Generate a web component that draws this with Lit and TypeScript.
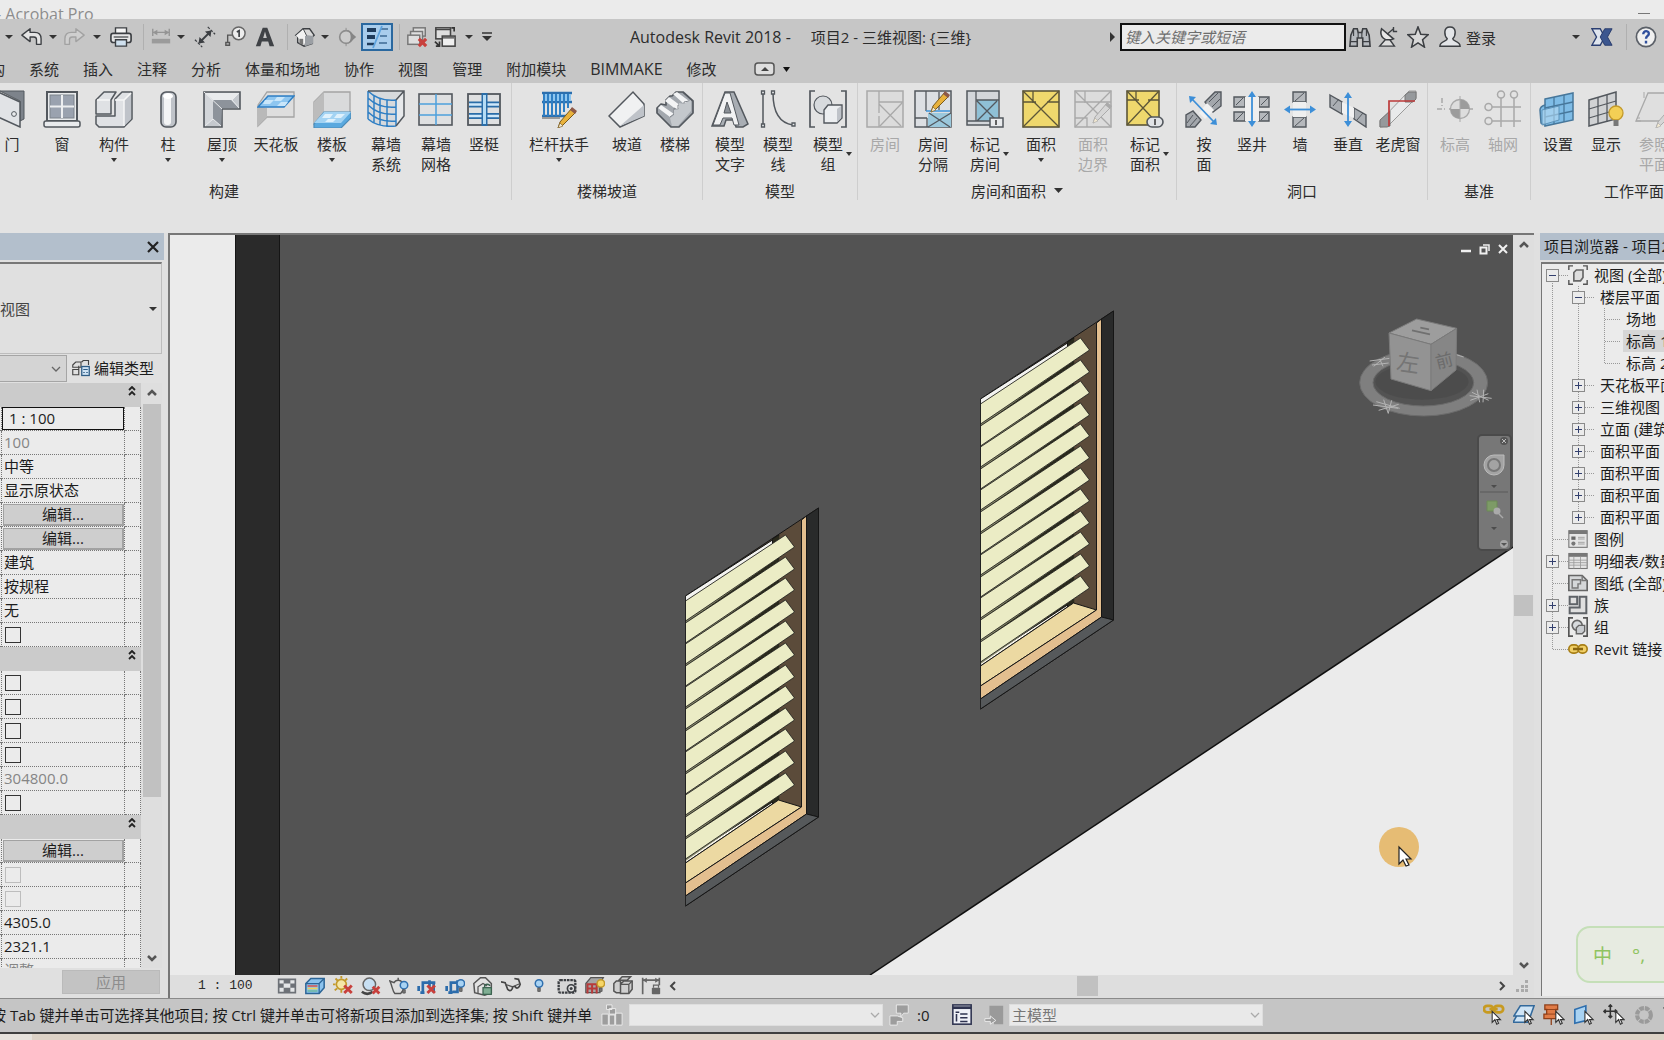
import { LitElement, html, svg, css, nothing } from "lit";
import { customElement, property } from "lit/decorators.js";
import { classMap } from "lit/directives/class-map.js";

const G = "#53585e";
const L = "#e9ebed";
const M = "#bfc3c9";
const B = "#2f7fc4";
const X = "#a9a9a9";

const pencil = (c1 = "#e9b23c", c2 = "#7a5a1c", dx = 0, dy = 0) => svg`
  <g transform="translate(${dx} ${dy})">
    <path d="M16 37l2-6L30 17l4 4-13 13z" fill=${c1} stroke=${c2} stroke-width="1"/>
    <path d="M28 19l2-3 5 4-2 3z" fill=${c1 === "#e9b23c" ? "#8d5a4a" : c2}/><path d="M16 37l2-5 3 3z" fill="#f4ead2" stroke=${c2} stroke-width=".6"/>
  </g>`;

const bulb = (x: number, y: number, r: number, c = "#a9d3f3", s = "#2f6fae") => svg`
  <circle cx=${x} cy=${y} r=${r} fill=${c} stroke=${s} stroke-width="1.8"/>
  <path d="M${x - 1.5} ${y + r + 1}v4h3v-4z" fill="#777" stroke="#555"/>`;

const redX = (x: number, y: number, s = 3) => svg`
  <path d="M${x - s} ${y - s}l${2 * s} ${2 * s}M${x + s} ${y - s}l${-2 * s} ${2 * s}" stroke="#c8403c" stroke-width="3.400" fill="none"/>`;

const pointer = (x: number, y: number) => svg`
  <path transform="translate(${x} ${y})" d="M0 0v12l3-3 2 5 2-1-2-4h4z" fill="#fff" stroke="#333" stroke-width="1.200"/>`;

const RIBBON: Record<string, unknown> = {
  door: svg`<path d="M5 1h26v28l-4 2V11L7 1z" fill="#7d838b" stroke=${G}/><path d="M5 2l22 10v25L5 27z" fill="#e1e3e6" stroke=${G} stroke-width="1.5"/><circle cx="21" cy="24" r="2.4" fill=${L} stroke=${G}/>`,
  window: svg`<rect x="4" y="2" width="30" height="29" fill=${L} stroke=${G} stroke-width="2"/><rect x="7" y="5" width="24" height="23" fill="#9aa2af" stroke="#7d838b"/><path d="M19 5v23M7 16.500h24" stroke="#eceef0" stroke-width="2"/><rect x="1" y="31" width="36" height="6" rx="2" fill=${L} stroke=${G} stroke-width="1.5"/>`,
  component: svg`<path d="M1 10l8-8h12l-5 8v14H1zM1 26h19V9l7-7h10v27l-8 8H4l-3-3z" fill="#dfe1e4" stroke=${G} stroke-width="1.500" stroke-linejoin="round"/><path d="M29 11l7-7v25l-7 7z" fill=${M}/><path d="M2 10h13M20 10h9M29 10l7-7M29 10v26" fill="none" stroke="#f6f6f6" stroke-width="1.500"/>`,
  column: svg`<rect x="12" y="2" width="15" height="35" rx="5" fill=${M} stroke=${G} stroke-width="1.6"/><rect x="15" y="4" width="7" height="31" rx="3" fill="#f3f4f5"/><ellipse cx="19" cy="6" rx="5" ry="3" fill="#fff"/>`,
  roof: svg`<path d="M1 2h36v17H19v18H1z" fill="#c5c9ce" stroke=${G} stroke-width="1.6"/><path d="M2 3h34l-7 7H10z" fill="#e9ebed"/><path d="M2 3l8 7v19l-8 7z" fill="#d3d6da"/><path d="M10 10h18l8 8H19l-1 18-8-7z" fill="#8d939b"/><path d="M1 2l18 17M10 29l-8 7M10 29l8 7M29 10l7-7M29 10l7 8" stroke=${L} fill="none"/>`,
  ceiling: svg`<path d="M1 15l9-13h27v25H10L1 36z" fill="#dedede" stroke="#a4a4a4" stroke-width="1.3"/><path d="M10 27V18M1 36V16l9 2v9z" fill="#b9b9b9"/><path d="M1 17l10-11h26L27 17z" fill="#8ec6f0" stroke="#2f7fc4" stroke-width="1.500"/><path d="M8 10h9l-4 4H6zM20 7h8l-4 4h-7zM24 12h7l-3 4h-8z" fill="#c9e6fa"/>`,
  floor: svg`<path d="M1 12L11 2h26v22H11L1 34z" fill="#d9dadb" stroke="#a4a4a4" stroke-width="1.3"/><path d="M1 12l10-10v22L1 34z" fill="#bcbcbc"/><path d="M1 34l10-12h27v6l-10 10H1z" fill="#5aa9df" stroke="#4d8cb8" stroke-width="1.200"/><path d="M1 33l10-11h27L28 33z" fill="#a3d3f3"/><path d="M12 24h8l-3 4H9zM24 24h8l-4 4h-7zM15 29h8l-3 3h-8z" fill="#dff1fc"/>`,
  curtain: svg`<path d="M1 1h36l-8 10v24C15 37 7 33 1 29z" fill="#d7dadd"/><path d="M37 1v25l-8 10V11z" fill="#e7e9eb"/><path d="M1 1c8 8 17 10 28 9M1 8c8 8 17 10 28 9M1 15c8 8 17 10 28 9M1 22c8 8 17 10 28 9M1 29c8 7 17 8 28 7M1 1v28M7 5v28M13 8v27M20 10v27M29 10v26" fill="none" stroke=${B} stroke-width="1.500"/><path d="M1 1h36v25l-8 10M37 1l-8 9" fill="none" stroke=${G} stroke-width="1.500"/>`,
  grid: svg`<rect x="2" y="4" width="33" height="31" fill="#dfe0e1" stroke=${G} stroke-width="1.600"/><path d="M19 4v31M2 14h33M2 25h33" stroke="#4ea0dc" stroke-width="1.500"/>`,
  mullion: svg`<rect x="3" y="4" width="32" height="31" fill="#dfe0e1" stroke=${G} stroke-width="1.800"/><path d="M4 14.500h30M4 26h30" stroke="#2a6da8" stroke-width="6"/><path d="M4 14.500h30M4 26h30" stroke="#cfe8fa" stroke-width="2.500"/><path d="M19.500 3v33" stroke="#2a6da8" stroke-width="6"/><path d="M19.500 5v29" stroke="#b5dcf5" stroke-width="3"/>`,
  railing: svg`<path d="M2 3h30M2 12h30M2 26h24" stroke="#2c6fae" stroke-width="2.500"/><path d="M3 4h28v7H3z" fill="#8ec6f0"/><path d="M4 4v22M8 4v22M12 4v22M16 4v22M20 4v22M24 4v18M28 4v14" stroke=${B} stroke-width="2"/><path d="M2 28h18" stroke="#9a9a9a" stroke-width="2"/>${pencil(undefined, undefined, 2, 1)}`,
  ramp: svg`<path d="M1 26L25 2l11 12v12L12 37z" fill="#f0f1f2" stroke=${G} stroke-width="1.500"/><path d="M12 36l24-21v11z" fill=${M}/>`,
  stairs: svg`<path d="M1 17L6 12V17L11 12V8L16 3V2H23L36 10V24L22 37H15L1 23z" fill="none"/><path d="M16 6l4-4h7l10 9v12L23 37h-8L1 23v-5l4-4 5 1v-5l4-4z" fill="#a3a8ae" stroke=${G} stroke-width="1.700" stroke-linejoin="round"/><path d="M2 18l3-3 13 9-4 3zM9 11l4-4 12 9-4 4zM17 4l4-2 12 9-5 3z" fill="#f3f4f5"/><path d="M14 27l4-3v-6l4 2v-5l6 0v-3l5-1" fill="none" stroke="#80858b"/><path d="M14 28l4-3v-5l5-1v-6l5 1 7-4v11L22 36h-6z" fill="#c4c8cc"/>`,
  text3d: svg`<path d="M1 36L14 2h9l14 32-5 3h-7l-2-7h-8l-2 6z" fill="#a9aeb4" stroke=${G} stroke-width="1.500"/><path d="M2 35L14 3h5l9 32h-5l-2-7h-9l-3 7z" fill="#f1f2f3" stroke=${G}/><path d="M13 23l3-11 4 11z" fill="#8a9097" stroke=${G}/>`,
  lines: svg`<path d="M4 3v32M14 3c0 18 6 30 20 32" fill="none" stroke=${G} stroke-width="1.500"/><g fill=${L} stroke=${G} stroke-width="1.300"><path d="M2.500 1h3v3h-3zM2.500 34h3v3h-3zM12.500 1h3v3h-3zM33 33h3v3h-3z"/></g>`,
  group: svg`<path d="M6 1H1v36h5M32 1h5v36h-5" fill="none" stroke=${G} stroke-width="1.700"/><circle cx="14" cy="15" r="9" fill="#d7dadd" stroke=${G} stroke-width="1.200"/><path d="M15 20l4-5h14v13l-5 5H15z" fill="#eceef0" stroke=${G} stroke-width="1.400"/><path d="M28 19l4-3v12l-4 4z" fill=${M}/>`,
  room: svg`<rect x="1" y="1" width="36" height="36" fill="#dcdcdc" stroke=${X} stroke-width="1.500"/><path d="M13 1v22M13 12h24M13 37V26M13 14l22 22M36 13L14 36" stroke=${X} fill="none" stroke-width="1.300"/>`,
  roomSep: svg`<rect x="1" y="1" width="36" height="36" fill="#dcdfe3" stroke=${G} stroke-width="1.500"/><path d="M14 23h23v14H14z" fill="#9bc8dc"/><path d="M12 1v20M1 28h12M13 28v9M25 2v18M14 37l23-14M15 23l21 14" stroke=${G} fill="none" stroke-width="1.300"/><path d="M12 21h24" stroke="#3d95dd" stroke-width="1.500"/>${pencil(undefined, undefined, 1, -15)}`,
  tagRoom: svg`<rect x="1" y="1" width="32" height="34" fill="#d3d6da" stroke=${G} stroke-width="1.500"/><path d="M11 10h21v21H11z" fill="#8fc0d6"/><path d="M10 1v30M10 10h23M1 31h23M11 11l20 20M31 11L11 31" stroke=${G} fill="none" stroke-width="1.300"/><rect x="24" y="28" width="13" height="9" fill=${L} stroke=${G} stroke-width="1.500"/><path d="M30 30v5" stroke="#333" stroke-width="1.500"/>`,
  area: svg`<rect x="1" y="1" width="36" height="36" fill="#efd86d" stroke="#5c5638" stroke-width="1.600"/><path d="M1 1l36 36M37 1L1 37M11 1v12M1 12h13M25 12h12" stroke="#5c5638" fill="none" stroke-width="1.300"/>`,
  areaB: svg`<rect x="1" y="1" width="36" height="36" fill="#dcdcdc" stroke=${X} stroke-width="1.500"/><path d="M1 1l36 36M37 1L1 37M11 1v12M1 12h36M1 28h12v9" stroke=${X} fill="none" stroke-width="1.300"/>${pencil("#d6d6d6", "#aaa", 3, -4)}`,
  tagArea: svg`<rect x="1" y="1" width="32" height="34" fill="#efd86d" stroke="#5c5638" stroke-width="1.600"/><path d="M1 1l32 34M33 1L1 35M10 1v10M1 10h12M22 10h11" stroke="#5c5638" fill="none" stroke-width="1.300"/><rect x="21" y="27" width="16" height="10" rx="5" fill="#e1e3e6" stroke=${G} stroke-width="1.600"/><path d="M29 29v6" stroke="#333" stroke-width="1.500"/>`,
  byFace: svg`<path d="M1 37V25l7-4 8 9-6 7zM20 12L30 2h6v14l-8 6z" fill="#a3a7ac" stroke=${G} stroke-width="1.400"/><path d="M2 33l6-8M5 36l7-8M24 12l9-9M27 17l8-8" stroke=${G}/><path d="M14 23l8-10 7 7-9 9z" fill="#f1f1f1"/><path d="M7 9l22 23" stroke="#3d8fd8" stroke-width="1.800"/><path d="M4 6l7 1-6 6zM32 35l-7-1 6-6z" fill="#3d8fd8"/>`,
  shaft: svg`<g fill="#b5b8bc" stroke=${G} stroke-width="1.400"><path d="M1 7h11v10H1zM26 7h10v10H26zM1 22h11v9H1zM26 22h10v9H26z"/></g><path d="M12 7h14v24H12z" fill="#efefef"/><path d="M3 15l7-7M28 15l7-7M3 30l7-7M28 30l7-7" stroke=${G}/><path d="M19 5v28" stroke="#3d8fd8" stroke-width="1.800"/><path d="M19 1l4 6h-8zM19 37l4-6h-8z" fill="#3d8fd8"/>`,
  wall: svg`<g fill="#b5b8bc" stroke=${G} stroke-width="1.400"><path d="M12 2h13v10H12zM12 27h13v10H12z"/></g><path d="M12 12h13v15H12z" fill="#efefef"/><path d="M14 11l9-8M14 36l9-8" stroke=${G}/><path d="M6 19.500h26" stroke="#3d8fd8" stroke-width="1.800"/><path d="M3 19.500l6-4v8zM35 19.500l-6-4v8z" fill="#3d8fd8"/>`,
  vertical: svg`<path d="M1 5l12 7v12L1 17zM25 18l12 7v12l-12-8z" fill="#aaaeb3" stroke=${G} stroke-width="1.400"/><path d="M13 12l12 6v10l-12-5z" fill="#f1f1f1"/><path d="M4 16l6-7M28 30l6-7" stroke=${G}/><path d="M19 5v28" stroke="#3d8fd8" stroke-width="1.800"/><path d="M19 2l4 6h-8zM19 37l4-6h-8z" fill="#3d8fd8"/>`,
  dormer: svg`<path d="M1 37l8-1L37 8V1h-7L1 31z" fill="#e9eaeb" stroke="#9a9a9a"/><path d="M26 5l4-3h7v7l-3 3h-8zM1 30l10-9v15l-3 1H1z" fill="#96999c" stroke="#777"/><path d="M10 36V11h26" fill="none" stroke="#bd3b3b" stroke-width="1.700"/>`,
  level: svg`<path d="M1 19h8M13 19h24M6 8v8" stroke=${X} stroke-width="1.500" stroke-dasharray="5 2"/><circle cx="24" cy="19" r="9.500" fill="#ddd" stroke=${X} stroke-width="1.300"/><path d="M24 19V9.500a9.500 9.500 0 0 1 9.500 9.500zM24 19v9.500a9.500 9.500 0 0 1-9.500-9.500z" fill="#9c9c9c"/><path d="M24 6v26" stroke=${X}/>`,
  axis: svg`<g fill="none" stroke=${X} stroke-width="1.500"><circle cx="4.500" cy="17" r="3.500"/><circle cx="4.500" cy="31" r="3.500"/><circle cx="17" cy="4.500" r="3.500"/><circle cx="30" cy="4.500" r="3.500"/><path d="M8 17h29M8 31h29M17 8v29M30 8v29"/></g>`,
  set: svg`<path d="M1 20c0-3 2-4 5-5V35l-4-2zM6 9l28-6v27L6 36z" fill="#7fbce6" stroke="#47779b" stroke-width="1.500"/><path d="M6 18l28-6M6 27l28-6M15 7v27M25 5v27" stroke="#47779b" stroke-width="1.300" fill="none"/><path d="M3 20l17-4v14L3 35z" fill="#b7dcf4" fill-opacity=".6" stroke="#5d93ba"/>`,
  show: svg`<path d="M2 10l27-8v27L2 36z" fill="#d0d2d4" stroke=${G} stroke-width="1.500"/><path d="M2 19l27-8M2 28l27-8M11 7v27M20 5v27" stroke=${G} stroke-width="1.300" fill="none"/><circle cx="29" cy="23" r="7" fill="#f3cf55" stroke="#c39a2b" stroke-width="1.300"/><path d="M26.500 30h5v6h-5z" fill="#777"/>`,
  ref: svg`<path d="M1 31L13 3h24v28z" fill="#dfdfdf" stroke=${X} stroke-width="1.300"/><path d="M9 2v6M1 31h5M2 28h3" stroke=${X}/>${pencil("#d6d6d6", "#aaa", 5, 1)}`,
};

const DK = "#3c3f43";
const SMALL: Record<string, unknown> = {
  undo: svg`<path d="M2 10l9-7v4h5c5 0 7 3 7 7v6h-5v-5c0-2-1-3-3-3h-4v5z" fill="#e4e4e4" stroke=${DK} stroke-width="1.500" stroke-linejoin="round"/>`,
  redo: svg`<path d="M22 10l-9-7v4H8c-5 0-7 3-7 7v6h5v-5c0-2 1-3 3-3h4v5z" fill="#cfcfcf" stroke="#a2a2a2" stroke-width="1.500" stroke-linejoin="round"/>`,
  print: svg`<path d="M6 2h12v7H6z" fill="#f4f4f4" stroke=${DK} stroke-width="1.500"/><rect x="1" y="8" width="22" height="10" rx="2.500" fill="#e6e6e6" stroke=${DK} stroke-width="1.800"/><path d="M6 15h12v7H6z" fill="#cfe0ee" stroke=${DK} stroke-width="1.500"/><path d="M4 12h16" stroke=${DK} stroke-width="1.300"/>`,
  measure: svg`<path d="M3 3v8M21 3v8M3 7h18" stroke="#949494" fill="none" stroke-width="1.500"/><path d="M3 7l5-3v6zM21 7l-5-3v6z" fill="#949494"/><rect x="2" y="14" width="20" height="5" fill="#9b9b9b"/>`,
  dim: svg`<path d="M6 18L18 6" stroke=${DK} stroke-width="2"/><path d="M5 19l1-7 6 6zM19 5l-1 7-6-6z" fill=${DK}/><path d="M1 15l8 8M15 1l8 8" stroke=${DK} stroke-width="1.300" stroke-dasharray="3 1.500"/>`,
  tag: svg`<circle cx="16" cy="8" r="7" fill="#ededed" stroke="#666" stroke-width="1.600"/><path d="M14 6.500L16.500 5v7" stroke=${DK} stroke-width="1.800" fill="none"/><path d="M9 10H4v8M2 18h4v3H2z" stroke="#555" fill="none" stroke-width="1.500"/>`,
  letterA: svg`<path d="M2 22L9.500 2h5L22 22h-5l-1.500-5H8.500L7 22zM10 13h4l-2-7z" fill="#3f4246" fill-rule="evenodd"/>`,
  home: svg`<path d="M2 10l8-7h7l5 7-2 2v7l-9 3-7-4v-7z" fill="#d9d9d9" stroke=${DK} stroke-width="1.500"/><path d="M2 10l8-7 4 8-2 10" fill="#f2f2f2" stroke=${DK}/><path d="M12 11l3-1 6 1v8l-9 3z" fill="#9b9fa4"/><path d="M6 14h4v6H6z" fill="#777"/>`,
  section: svg`<circle cx="11" cy="12" r="7" fill="#ccc" stroke="#8d8d8d" stroke-width="1.800"/><path d="M13 4l9 8-9 8c4-5 4-11 0-16z" fill="#858585"/><path d="M11 2v3M11 19v3" stroke="#8d8d8d"/>`,
  thin: svg`<path d="M2 5h9M2 12h8" stroke="#1f3c5c" stroke-width="4"/><path d="M2 19h7" stroke="#1f3c5c" stroke-width="2.500"/><path d="M16 4h7M15 11h7M14 18h8" stroke="#3e6a93" stroke-width="1.500"/><path d="M17 1L8 23" stroke="#5da2dd" stroke-width="1.800"/>`,
  closeHidden: svg`<g fill="#dedede" stroke="#777" stroke-width="1.600"><rect x="8" y="2" width="13" height="9"/><rect x="5" y="6" width="13" height="9"/><rect x="2" y="10" width="13" height="10"/></g>${redX(18, 18, 4)}`,
  switchWin: svg`<rect x="2" y="2" width="16" height="12" fill="#dedede" stroke="#444" stroke-width="1.700"/><rect x="9" y="11" width="14" height="11" fill="#efefef" stroke="#444" stroke-width="1.700"/><path d="M2 4h16M9 13h13" stroke="#444" stroke-width="1.500"/><path d="M1 17l5 5M2 22h4v-5M19 2h3v4" stroke="#333" stroke-width="1.800" fill="none"/>`,
  binoc: svg`<path d="M1 22l1-12 3-7h4l1 4h4l1-4h4l3 7 1 12h-8v-9h-6v9z" fill="#b6babf" stroke=${DK} stroke-width="1.700"/><path d="M10 7v6M14 7v6M1 17h8M15 17h8M5 3v8M19 3v8" stroke=${DK} stroke-width="1.200"/>`,
  dish: svg`<path d="M5 3c-3 9 4 15 13 11z" fill="#e8e8e8" stroke=${DK} stroke-width="1.700"/><path d="M11 9l7-6M18 1v5h4" fill="none" stroke=${DK} stroke-width="1.500"/><path d="M9 15l-6 7h16l-5-7z" fill="#ddd" stroke=${DK} stroke-width="1.500"/>`,
  star: svg`<path d="M12 1l3 8 8 .5-6 5.500 2 8-7-4.500L5 23l2-8-6-5.500L9 9z" fill="#d8d8d8" stroke=${DK} stroke-width="1.700"/>`,
  user: svg`<path d="M12 1c8 0 6 10 3 13 0 3 8 2 8 8H1c0-6 8-5 8-8C6 11 4 1 12 1z" fill="#e3e5e8" stroke=${DK} stroke-width="1.600"/>`,
  exchange: svg`<path d="M1 3h9l5 9-5 9H1l5-9z" fill="#dfe5ee" stroke="#2b3f72" stroke-width="1.500"/><path d="M23 3h-8l-5 9 5 9h8l-5-9z" fill="#3c568f" stroke="#26396a"/>`,
  help: svg`<circle cx="12" cy="12" r="10.500" fill="#f0f0f0" stroke="#5b6068" stroke-width="1.800"/><path d="M9 9c0-5 7-4 6 0-.5 2-3 2-3 5M12 16v3" fill="none" stroke="#2f4f9c" stroke-width="2.600"/>`,
  collapse: svg`<rect x="2" y="6" width="19" height="12" rx="3" fill="#dedede" stroke="#555" stroke-width="1.500"/><path d="M8 14l4-4 4 4z" fill="#444"/>`,
  editType: svg`<g fill="none" stroke="#444" stroke-width="1.500"><path d="M1 8l4-4h7v7H1zM13 4l2-2h7v6M1 14h8v7H1zM9 14V9"/></g><rect x="13" y="10" width="10" height="12" fill="#cfe3f4" stroke="#2f5d86" stroke-width="1.700"/><path d="M15 14h6M15 18h2M19 18h2" stroke="#2f5d86" stroke-width="1.500"/>`,
  detail: svg`<rect x="1" y="3" width="22" height="18" fill="#6d7177"/><path d="M3 5h5v4H3zM16 5h5v4h-5zM8 9h8v5H8zM3 14h5v5H3zM16 14h5v5h-5z" fill="#e4e6e8"/>`,
  style: svg`<path d="M1 9l6-6h16v11l-6 7H1z" fill="#8cc3ee" stroke="#2c6596" stroke-width="1.800"/><path d="M1 9h16v12M17 9l6-6" fill="none" stroke="#2c6596" stroke-width="1.500"/><path d="M3 12h12" stroke="#d15c5c" stroke-width="2"/><path d="M3 15h12" stroke="#ecd35b" stroke-width="2"/><path d="M3 18h12" stroke="#67b58d" stroke-width="1.500"/>`,
  sun: svg`<circle cx="10" cy="10" r="6" fill="#f5e7a8" stroke="#c39a2b" stroke-width="2"/><path d="M10 0v3M3 10H0M3 3l3 3M17 3l-3 3M2 17l3-2M10 16v4" stroke="#c39a2b" stroke-width="2.200"/>${redX(18, 16, 4.500)}`,
  shadow: svg`<circle cx="10" cy="10" r="7.500" fill="#c7dff2" stroke="#666" stroke-width="1.800"/><path d="M1 19c4 3 9 3 13 0" stroke="#444" stroke-width="3" fill="none"/>${redX(18, 17, 4)}`,
  teapot: svg`<path d="M1 6l5 2c2-4 8-4 10 0 3 5 1 10-2 13H7C4 18 4 12 1 6zM11 2v3" fill="#dedede" stroke="#555" stroke-width="1.700"/>${bulb(18, 11, 4.500)}`,
  cropX: svg`<path d="M2 12v6M4 20h5M7 21V8h15M15 5v8M20 8v12" fill="none" stroke="#2c6cab" stroke-width="3.200"/>${redX(17, 16, 4.500)}`,
  cropShow: svg`<path d="M2 12v6M4 20h5M7 21V8h11M15 5v14H9" fill="none" stroke="#2c6cab" stroke-width="3.200"/>${bulb(19, 9, 4.500)}`,
  lock: svg`<path d="M1 9l8-7h6l7 7v11l-8 3-12-3z" fill="#e2e2e2" stroke="#555" stroke-width="1.800"/><path d="M6 21v-8l6-4 5 3" fill="none" stroke="#555" stroke-width="1.500"/><rect x="12" y="14" width="10" height="8" fill="#7fae93" stroke="#3b6350" stroke-width="1.500"/><path d="M14 14v-2c0-3 6-3 6 0" fill="none" stroke="#3b6350" stroke-width="1.800"/>`,
  glasses: svg`<path d="M0 7l5 1 3 8c3 3 6 1 6-3 2-1 3-1 3 0 2 3 5 1 6-3l-2-6-5-1" fill="none" stroke="#444" stroke-width="2"/><path d="M5 10l9 3M16 12l7-3" stroke="#555" stroke-width="1.500"/>`,
  reveal: svg`${bulb(12, 9, 4.500)}`,
  temp: svg`<rect x="2" y="5" width="20" height="15" rx="2" fill="#d6d6d6" stroke=${DK} stroke-width="2.800" stroke-dasharray="3 1"/><circle cx="17" cy="15" r="4.500" fill="#ddd" stroke=${DK} stroke-width="2"/><circle cx="17" cy="15" r="1.800" fill=${DK}/>`,
  analytic: svg`<path d="M1 9l6-7h15l-4 7v11H1z" fill="#a6a6a6" stroke="#555" stroke-width="1.500"/><path d="M3 21V10h11v11M8.500 10v11M2 15h12" fill="none" stroke="#b73a3a" stroke-width="2.400"/>${bulb(19, 9, 4.500, "#f6d668", "#c39a2b")}`,
  displace: svg`<path d="M7 5l4-4h10l-4 4zM1 9l3-3h5v14H4l-3-2zM9 10l4-4h10v10l-4 5H9z" fill="#cfcfcf" stroke="#555" stroke-width="1.800"/><path d="M9 10h10v11M19 10l4-4" stroke="#555" stroke-width="1.500" fill="none"/>`,
  constraint: svg`<path d="M2 2v20M22 2v9M2 5h20" fill="none" stroke="#666" stroke-width="2"/><path d="M2 5l5-3v6zM22 5l-5-3v6z" fill="#666"/><rect x="13" y="14" width="10" height="8" rx="1" fill="#666"/><path d="M15 14v-3h6v3" stroke="#666" stroke-width="1.500" fill="none"/>`,
  workset: svg`<g fill="#9d9d9d" stroke="#ececec" stroke-width="1"><path d="M1 11h7v12H1zM9 5h7v6H9zM9 12h6v11H9zM16 10h7v13h-7zM6 1h6v5H6z"/></g>`,
  request: svg`<path d="M8 1h13v9h-5l-3 4v-4H8zM1 13h8l6 2v4H9v4H1z" fill="#9d9d9d" stroke="#ececec"/>`,
  options: svg`<rect x="2" y="1" width="20" height="21" fill="#eef0f6" stroke="#2e3350" stroke-width="1.700"/><path d="M2 4h20" stroke="#2e3350" stroke-width="3"/><path d="M5 9h4M10 11h8M10 15h8M10 19h8M6 11v8" stroke="#2e3350" stroke-width="1.700"/>`,
  exclude: svg`<path d="M7 2h15v20H12v-6l-5-2z" fill="#9a9a9a"/><path d="M2 16h6v-3l6 5-6 4v-3H2z" fill="#9a9a9a" stroke="#eee"/>`,
  selLink: svg`<g fill="none" stroke="#c79a20" stroke-width="3"><rect x="1" y="2" width="10" height="7" rx="3.500"/><rect x="12" y="2" width="10" height="7" rx="3.500"/><path d="M7 5.500h9"/></g>${pointer(10, 8)}`,
  selUnder: svg`<path d="M1 13L8 2h15l-4 11zM0 20l4-7h15l-3 7z" fill="#cfe4f5" stroke="#33699b" stroke-width="1.700"/>${pointer(13, 8)}`,
  selPin: svg`<path d="M2 1h14v5h-2v5h3v5H1v-5h3V6H2zM9 16v7" fill="#e07b46" stroke="#8f3f18" stroke-width="1.400"/><path d="M4 6h10M4 11h10" stroke="#8f3f18"/>${pointer(14, 8)}`,
  selFace: svg`<path d="M2 6l12-4v16L2 21z" fill="#a9d3f3" stroke="#2f6fae" stroke-width="1.800"/>${pointer(13, 8)}`,
  selDrag: svg`<path d="M8 1v14M1 8h14M6 3l2-2 2 2M6 13l2 2 2-2M3 6L1 8l2 2M13 6l2 2-2 2" fill="none" stroke="#333" stroke-width="1.700"/>${pointer(14, 8)}`,
  progress: svg`<circle cx="12" cy="12" r="7.500" fill="none" stroke="#9a9a9a" stroke-width="4.500" stroke-dasharray="5 1"/>`,
  tViews: svg`<path d="M6 1H1v5M18 1h5v5M6 23H1v-5M18 23h5v-5" fill="none" stroke="#555" stroke-width="1.700"/><path d="M7 9l3-3h8v9l-3 4H7z" fill="#dedede" stroke="#666" stroke-width="2"/>`,
  tLegend: svg`<rect x="1" y="2" width="22" height="20" fill="#e4e4e4" stroke="#777" stroke-width="1.300"/><path d="M1 4h22" stroke="#777" stroke-width="4"/><path d="M4 9h5v4H4z" fill="#666"/><circle cx="6.500" cy="17.500" r="2.500" fill="#777"/><path d="M12 10h8M12 12h8M12 16h8M12 18h8" stroke="#999"/>`,
  tTable: svg`<rect x="1" y="3" width="22" height="18" fill="#e4e4e4" stroke="#777" stroke-width="1.300"/><path d="M1 5h22" stroke="#777" stroke-width="4"/><path d="M1 11h22M1 14h22M1 17h22M7 7v14M15 7v14" stroke="#9a9a9a"/>`,
  tSheet: svg`<path d="M1 3h16l6 6v12H1z" fill="#d5d7d9" stroke="#666" stroke-width="2"/><path d="M5 8h10v5h-3v5H5zM17 3v6h6" fill="none" stroke="#777" stroke-width="1.700"/>`,
  tFamily: svg`<path d="M2 2h9v9H2zM14 2h8v20H2v-7h12z" fill="#dfdfdf" stroke="#5f6368" stroke-width="2.400"/>`,
  tGroup: svg`<path d="M6 1H1v22h5M18 1h5v22h-5" fill="none" stroke="#555" stroke-width="2"/><circle cx="11" cy="10" r="6" fill="#d7dadd" stroke="#666" stroke-width="2"/><path d="M10 13l3-3h7v7l-3 3h-7z" fill="#c9ccd0" stroke="#666" stroke-width="1.700"/>`,
  tLink: svg`<g fill="#f1cf66" stroke="#a87f17" stroke-width="2"><rect x="1" y="7" width="12" height="10" rx="5"/><rect x="12" y="7" width="11" height="10" rx="5"/></g><path d="M6 12h12" stroke="#8a6610" stroke-width="3"/>`,
};

const base = css`
  :host { font-family: "Open Sans", "Noto Sans CJK SC", sans-serif; font-size: 15px; color: #2c2c2c; }
  * { box-sizing: border-box; }
  button { font: inherit; color: inherit; background: none; border: 0; padding: 0; margin: 0; }
  svg { display: block; flex: none; }
`;

const icon = (name: string, size = 22) => html`<svg width=${size} height=${size} viewBox="0 0 24 24" aria-hidden="true">${SMALL[name]}</svg>`;
const caret = () => html`<svg width="8" height="4" viewBox="0 0 8 4" aria-hidden="true"><path d="M0 0h8L4 4z" fill="#333"/></svg>`;
const chevron = (dir: "up" | "down" | "left" | "right", color = "#555", w = 2.5) => {
  const d = { up: "M4 10l4-4 4 4", down: "M4 6l4 4 4-4", left: "M10 4L6 8l4 4", right: "M6 4l4 4-4 4" }[dir];
  return html`<svg width="16" height="16" viewBox="0 0 16 16" aria-hidden="true"><path d=${d} fill="none" stroke=${color} stroke-width=${w}/></svg>`;
};

@customElement("title-bar")
class TitleBar extends LitElement {
  static styles = [base, css`
    :host { display: flex; align-items: center; height: 36px; background: #c6c6c6; padding: 0 4px 0 1px; flex: none; white-space: nowrap; }
    button { display: flex; align-items: center; justify-content: center; height: 28px; flex: none; }
    .s { width: 24px; } .m { width: 28px; } .l { width: 32px; } .xl { width: 36px; } .d { width: 16px; } .c { width: 20px; }
    .on { background: #a9cdec; border: 2px solid #2a689f; }
    .sep { width: 12px; height: 26px; flex: none; display: flex; justify-content: center; }
    .sep::before { content: ""; width: 1px; background: #b0b0b0; }
    h1 { flex: 1; min-width: 0; margin: 0; font-size: 15px; font-weight: 400; display: flex; justify-content: center; gap: 20px; overflow: hidden; line-height: 24px; }
    .app { font-size: 16px; }
    input { width: 226px; height: 28px; border: 2px solid #111; background: #ebebeb; font: inherit; font-family: "Noto Sans CJK SC", sans-serif; font-style: oblique; padding: 0 3px 2px; margin: 0; flex: none; border-radius: 0; }
    input::placeholder { color: #6d6d6d; opacity: 1; font-style: oblique; }
    .login { width: 102px; justify-content: flex-start; }
  `];
  tool(name: string, label: string, cls = "m", size = 22) {
    return html`<button class=${cls} aria-label=${label}>${icon(name, size)}</button>`;
  }
  drop(label: string) {
    return html`<button class="d" aria-label=${label}>${caret()}</button>`;
  }
  render() {
    return html`
      ${this.drop("保存选项")}
      ${this.tool("undo", "放弃")}${this.drop("放弃列表")}
      ${this.tool("redo", "重做")}${this.drop("重做列表")}
      ${this.tool("print", "打印", "l")}<span class="sep"></span>
      ${this.tool("measure", "测量", "s")}${this.drop("测量方式")}
      ${this.tool("dim", "对齐尺寸标注", "l")}${this.tool("tag", "按类别标记")}${this.tool("letterA", "文字", "l")}<span class="sep"></span>
      ${this.tool("home", "默认三维视图", "s")}${this.drop("三维视图选项")}${this.tool("section", "剖面")}
      ${this.tool("thin", "细线", "l on", 24)}<span class="sep"></span>
      ${this.tool("closeHidden", "关闭隐藏窗口", "s")}${this.tool("switchWin", "切换窗口", "l")}${this.drop("窗口列表")}
      <button class="c" aria-label="自定义快速访问工具栏"><svg width="10" height="10" viewBox="0 0 10 10"><path d="M0 1h10" stroke="#333" stroke-width="1.500"/><path d="M0 4h10L5 9z" fill="#333"/></svg></button>
      <h1><span class="app">Autodesk Revit 2018 -</span><span>项目2 - 三维视图: {三维}</span></h1>
      <button class="d" aria-label="展开搜索"><svg width="5" height="10" viewBox="0 0 5 10"><path d="M0 0v10l5-5z" fill="#333"/></svg></button>
      <input type="search" aria-label="搜索" placeholder="键入关键字或短语">
      ${this.tool("binoc", "搜索")}${this.tool("dish", "通讯中心")}${this.tool("star", "收藏夹", "l")}${this.tool("user", "账户", "l")}
      <button class="login">登录</button>${this.drop("登录选项")}
      ${this.tool("exchange", "应用商店", "xl")}<span class="sep"></span>${this.tool("help", "帮助")}
    `;
  }
}

@customElement("ribbon-tabs")
class RibbonTabs extends LitElement {
  static styles = [base, css`
    :host { display: flex; align-items: center; height: 28px; background: #c6c6c6; flex: none; overflow: hidden; white-space: nowrap; }
    nav { display: flex; margin-left: -37px; }
    a { color: inherit; text-decoration: none; padding: 0 12px; line-height: 26px; }
    .latin { font-size: 16px; }
    button { display: flex; align-items: center; gap: 6px; margin-left: 24px; }
  `];
  tabs = ["结构", "系统", "插入", "注释", "分析", "体量和场地", "协作", "视图", "管理", "附加模块", "BIMMAKE", "修改"];
  render() {
    return html`<nav>${this.tabs.map((t) => html`<a href="#" class=${classMap({ latin: /^[A-Z]/.test(t) })}>${t}</a>`)}</nav>
      <button aria-label="最小化功能区">${icon("collapse", 24)}<svg width="7" height="5" viewBox="0 0 7 5"><path d="M0 0h7L3.500 5z" fill="#111"/></svg></button>`;
  }
}

interface Tool { i: string; t: string[]; w: string; drop?: "below" | "side"; off?: boolean }
interface Panel { name: string; tools: Tool[]; edge?: string; menu?: boolean }

const PANELS: Panel[] = [
  { name: "构建", edge: "first", tools: [
    { i: "door", t: ["门"], w: "n" }, { i: "window", t: ["窗"], w: "m" }, { i: "component", t: ["构件"], w: "m", drop: "below" },
    { i: "column", t: ["柱"], w: "w", drop: "below" }, { i: "roof", t: ["屋顶"], w: "m", drop: "below" }, { i: "ceiling", t: ["天花板"], w: "w" },
    { i: "floor", t: ["楼板"], w: "w", drop: "below" }, { i: "curtain", t: ["幕墙", "系统"], w: "m" }, { i: "grid", t: ["幕墙", "网格"], w: "n" }, { i: "mullion", t: ["竖梃"], w: "n" },
  ] },
  { name: "楼梯坡道", tools: [
    { i: "railing", t: ["栏杆扶手"], w: "x", drop: "below" }, { i: "ramp", t: ["坡道"], w: "n" }, { i: "stairs", t: ["楼梯"], w: "n" },
  ] },
  { name: "模型", tools: [
    { i: "text3d", t: ["模型", "文字"], w: "n" }, { i: "lines", t: ["模型", "线"], w: "n" }, { i: "group", t: ["模型", "组"], w: "m", drop: "side" },
  ] },
  { name: "房间和面积", menu: true, tools: [
    { i: "room", t: ["房间"], w: "n", off: true }, { i: "roomSep", t: ["房间", "分隔"], w: "n" }, { i: "tagRoom", t: ["标记", "房间"], w: "w", drop: "side" },
    { i: "area", t: ["面积"], w: "w", drop: "below" }, { i: "areaB", t: ["面积", "边界"], w: "n", off: true }, { i: "tagArea", t: ["标记", "面积"], w: "w", drop: "side" },
  ] },
  { name: "洞口", tools: [
    { i: "byFace", t: ["按", "面"], w: "n" }, { i: "shaft", t: ["竖井"], w: "n" }, { i: "wall", t: ["墙"], w: "n" }, { i: "vertical", t: ["垂直"], w: "n" }, { i: "dormer", t: ["老虎窗"], w: "m" },
  ] },
  { name: "基准", tools: [
    { i: "level", t: ["标高"], w: "n", off: true }, { i: "axis", t: ["轴网"], w: "n", off: true },
  ] },
  { name: "工作平面", edge: "last", tools: [
    { i: "set", t: ["设置"], w: "n" }, { i: "show", t: ["显示"], w: "n" }, { i: "ref", t: ["参照", "平面"], w: "n", off: true },
  ] },
];

@customElement("ribbon-panels")
class RibbonPanels extends LitElement {
  static styles = [base, css`
    :host { display: flex; height: 150px; background: #e3e3e3; flex: none; overflow: hidden; white-space: nowrap; padding-bottom: 33px; }
    section { flex: none; display: flex; flex-direction: column; border-right: 1px solid #cecece; padding: 0 3px; }
    .first { margin-left: -63px; }
    .first .tools { padding-left: 48px; }
    .last .tools { padding-right: 56px; }
    .tools { display: flex; flex: 1; }
    button { display: flex; flex-direction: column; align-items: center; padding-top: 7px; line-height: 20px; }
    .n { width: 48px; } .m { width: 52px; } .w { width: 56px; } .x { width: 88px; }
    .label { display: grid; grid-template-columns: 1fr auto 1fr; align-items: center; column-gap: 3px; margin-top: 6px; }
    .label svg { grid-column: 3; }
    .text { grid-column: 2; text-align: center; }
    .text span { display: block; }
    .below { margin-top: 4px; }
    button:disabled { color: #a8a8a8; }
    h2 { margin: 0; font-size: 15px; font-weight: 400; line-height: 20px; height: 19px; display: flex; align-items: center; justify-content: center; gap: 8px; }
  `];
  tool(t: Tool) {
    return html`<button class=${t.w} ?disabled=${!!t.off}>
      <svg width="38" height="38" viewBox="0 0 38 38" aria-hidden="true">${RIBBON[t.i]}</svg>
      <span class="label"><span class="text">${t.t.map((s) => html`<span>${s}</span>`)}</span>
      ${t.drop === "side" ? html`<svg width="6" height="4" viewBox="0 0 6 4"><path d="M0 0h6L3 4z" fill="#333"/></svg>` : nothing}</span>
      ${t.drop === "below" ? html`<svg class="below" width="6" height="4" viewBox="0 0 6 4"><path d="M0 0h6L3 4z" fill="#333"/></svg>` : nothing}
    </button>`;
  }
  render() {
    return PANELS.map((p) => html`<section class=${p.edge ?? ""}>
      <div class="tools">${p.tools.map((t) => this.tool(t))}</div>
      <h2>${p.name}${p.menu ? html`<svg width="9" height="5" viewBox="0 0 9 5"><path d="M0 0h9L4.500 5z" fill="#333"/></svg>` : nothing}</h2>
    </section>`);
  }
}

type Row = { k: "head" | "text" | "input" | "edit" | "check"; v?: string; off?: boolean };
const ROWS: Row[] = [
  { k: "head", v: "图形" },
  { k: "input", v: "1 : 100" }, { k: "text", v: "100", off: true }, { k: "text", v: "中等" }, { k: "text", v: "显示原状态" },
  { k: "edit" }, { k: "edit" }, { k: "text", v: "建筑" }, { k: "text", v: "按规程" }, { k: "text", v: "无" }, { k: "check" },
  { k: "head", v: "范围" },
  { k: "check" }, { k: "check" }, { k: "check" }, { k: "check" }, { k: "text", v: "304800.0", off: true }, { k: "check" },
  { k: "head", v: "相机" },
  { k: "edit" }, { k: "check", off: true }, { k: "check", off: true }, { k: "text", v: "4305.0" }, { k: "text", v: "2321.1" }, { k: "text", v: "调整", off: true },
];

@customElement("property-palette")
class PropertyPalette extends LitElement {
  static styles = [base, css`
    :host { display: flex; flex-direction: column; width: 164px; min-height: 0; background: #e0e0e0; color: #1c1c1c; }
    header { height: 27px; background: #b3bfcc; display: flex; align-items: center; justify-content: flex-end; padding-right: 5px; flex: none; }
    .type { height: 92px; margin: 2px 2px 0 0; border: solid #bdbdbd; border-width: 2px 1px 1px 0; border-top-color: #777; display: flex; align-items: center; justify-content: space-between; padding-right: 4px; flex: none; color: #444; width: 162px; }
    .filter { display: flex; height: 29px; align-items: center; flex: none; }
    .combo { display: grid; width: 67px; height: 27px; align-items: center; }
    .combo select, .combo svg { grid-area: 1 / 1; }
    .combo svg { justify-self: end; margin-right: 3px; pointer-events: none; }
    select { appearance: none; width: 67px; height: 27px; border: 1px solid #a5a5a5; border-left: 0; background: #d4d4d4; border-radius: 0; margin: 0; }
    .edit-type { display: flex; align-items: center; gap: 4px; margin-left: 5px; line-height: 20px; padding-bottom: 2px; }
    .body { display: flex; flex: 1; min-height: 0; }
    .rows { width: 141px; overflow: hidden; background: #ebebeb; }
    table { border-spacing: 0; table-layout: fixed; width: 141px; }
    .c1 { width: 2px; } .c2 { width: 123px; } .c3 { width: 16px; }
    td { height: 24px; padding: 0; border-right: 1px dotted #777; border-bottom: 1px dotted #777; line-height: 23px; overflow: hidden; white-space: nowrap; }
    .txt { display: block; padding-left: 2px; }
    .off { color: #858585; }
    .head td { background: #cbcbcb; border: 0; vertical-align: top; padding-top: 3px; }
    .head button { display: flex; width: 100%; justify-content: flex-end; padding-right: 5px; }
    input[type="text"] { display: block; width: 122px; height: 23px; border: 1px solid #111; background: #ebebeb; font: inherit; color: inherit; padding: 0 0 0 6px; border-radius: 0; margin: 0; }
    input[type="checkbox"] { appearance: none; display: block; width: 16px; height: 16px; margin: 0 0 0 3px; border: 1px solid #333; border-radius: 0; }
    input[type="checkbox"]:disabled { border-color: #bdbdbd; }
    .edit { display: block; width: 121px; height: 22px; line-height: 18px; background: #cecece; border: 1px solid #a2a2a2; border-right-width: 2px; border-bottom-width: 2px; margin-left: 1px; }
    .scroll { width: 21px; display: flex; flex-direction: column; align-items: center; background: #dedede; padding: 2px 0; }
    .track { flex: 1; width: 18px; margin-top: 3px; }
    .thumb { height: 72%; background: #c1c1c1; }
    footer { height: 30px; display: flex; justify-content: flex-end; padding: 2px 4px 0 0; flex: none; }
    .apply { width: 98px; height: 24px; background: #c3c3c3; border: 1px solid #bababa; color: #8d8d8d; line-height: 20px; }
  `];
  cell(r: Row, n: number) {
    switch (r.k) {
      case "input": return html`<input type="text" aria-label="视图比例" .value=${r.v ?? ""}>`;
      case "edit": return html`<button class="edit">编辑...</button>`;
      case "check": return html`<input type="checkbox" aria-label=${`选项 ${n}`} ?disabled=${!!r.off}>`;
      default: return html`<span class=${classMap({ txt: true, off: !!r.off })}>${r.v}</span>`;
    }
  }
  render() {
    return html`
      <header><button aria-label="关闭"><svg width="12" height="12" viewBox="0 0 12 12"><path d="M1 1l10 10M11 1L1 11" stroke="#222" stroke-width="2.200"/></svg></button></header>
      <div class="type"><span>视图</span>${caret()}</div>
      <div class="filter"><span class="combo"><select aria-label="属性过滤器"></select>${chevron("down", "#666", 1.3)}</span>
        <button class="edit-type">${icon("editType", 18)}编辑类型</button></div>
      <div class="body">
        <div class="rows"><table><colgroup><col class="c1"><col class="c2"><col class="c3"></colgroup>
          ${ROWS.map((r, n) => r.k === "head"
            ? html`<tr class="head"><td colspan="3"><button aria-label=${r.v!}><svg width="8" height="10" viewBox="0 0 8 10"><path d="M1 4l3-3 3 3M1 9l3-3 3 3" fill="none" stroke="#222" stroke-width="1.800"/></svg></button></td></tr>`
            : html`<tr><td></td><td>${this.cell(r, n)}</td><td></td></tr>`)}
        </table></div>
        <div class="scroll"><button aria-label="向上">${chevron("up")}</button><div class="track"><div class="thumb"></div></div><button aria-label="向下">${chevron("down")}</button></div>
      </div>
      <footer><button class="apply" disabled>应用</button></footer>`;
  }
}

const SLATS = Array.from({ length: 12 }, (_, i) => Math.round(i * 21.6));

const louver = (dx: number, dy: number) => svg`
  <g transform="translate(${dx} ${dy})" stroke="#161616" stroke-width="1" stroke-linejoin="bevel">
    <path d="M686 596L819 508V817L686 906z" fill="#5b4b3a"/>
    <path d="M773 539l6-4v265l-6 4z" fill="#1d1c16"/>
    <path d="M686 596L780 535V800L686 862z" fill="#2a2a1c" stroke="none"/>
    <path d="M686 596L773 540V545L686 603z" fill="#f3f3f0"/>
    <path d="M780 536V800L802 806V520z" fill="#5b4b3a" stroke="none"/>
    <path d="M686 859L773 802V804L686 863z" fill="#f6f3ea"/>
    <path d="M686 863L779 800L802 807L686 883z" fill="#ecd9a2"/>
    <path d="M686 883L802 807V520L807 516V814L686 896z" fill="#e3bf8f"/>
    <path d="M807 516L819 508V817L807 814z" fill="#292a2a"/>
    <path d="M686 896L807 814L819 817L686 906z" fill="#56595b"/>
    ${SLATS.map((y) => svg`<path transform="translate(0 ${y})" d="M686 601L786 535L795 547L773 562L686 623z" fill="#8a8b6c" stroke="none"/>
      <path transform="translate(0 ${y})" d="M686 601L786 535L795 547L686 621z" fill="#ebecc5" stroke-width=".8"/>`)}
    <path d="M686 596V906" fill="none" stroke="#222"/>
  </g>`;

@customElement("model-view")
class ModelView extends LitElement {
  static styles = [base, css`
    :host { display: flex; flex-direction: column; min-width: 0; min-height: 0; border: solid #777; border-width: 2px 0 0 2px; background: #dedede; }
    .top { display: flex; flex: 1; min-height: 0; }
    .stage { position: relative; flex: 1; min-width: 0; overflow: hidden; background: #ebebeb; }
    .scene { width: 100%; height: 100%; }
    .controls { position: absolute; right: 2px; top: 4px; display: flex; gap: 2px; }
    .cube { position: absolute; right: 19px; top: 80px; }
    .navbar { position: absolute; right: 0; top: 199px; }
    .cursor { position: absolute; right: 93px; top: 592px; }
    .vscroll { width: 21px; display: flex; flex-direction: column; align-items: center; justify-content: space-between; background: #dedede; padding: 2px 0; }
    .vthumb { width: 19px; height: 21px; background: #c1c1c1; }
    .bar { display: flex; align-items: center; height: 23px; flex: none; padding-bottom: 2px; }
    .bar button { display: flex; align-items: center; justify-content: center; flex: none; }
    .bar .scale { font: 13px "Liberation Mono", monospace; width: 103px; justify-content: flex-start; padding-left: 28px; }
    .bar .vc { width: 28px; }
    .hscroll { flex: 1; display: flex; height: 20px; justify-content: center; }
    .hthumb { width: 21px; background: #c1c1c1; }
    .grip { width: 24px; display: flex; justify-content: center; }
  `];
  tools: [string, string][] = [["detail", "详细程度"], ["style", "视觉样式"], ["sun", "日光路径"], ["shadow", "阴影"], ["teapot", "渲染"], ["cropX", "裁剪视图"], ["cropShow", "显示裁剪区域"], ["lock", "锁定三维视图"], ["glasses", "临时隐藏"], ["reveal", "显示隐藏的图元"], ["temp", "临时视图属性"], ["analytic", "分析模型"], ["displace", "位移集"], ["constraint", "显示约束"]];
  render() {
    return html`
      <div class="top">
        <div class="stage">
          <svg class="scene" viewBox="170 235 1343 740" preserveAspectRatio="xMinYMin slice" role="img" aria-label="三维视图">
            <path d="M279 235H1513V547L870 975H279z" fill="#535353"/>
            <path d="M1513 547L870 975" stroke="#111" stroke-width="1.500"/>
            <path d="M235 235h44v740h-44z" fill="#2a2a2a"/><path d="M279.500 235v740M235.500 235v740" stroke="#151515"/>
            ${louver(-0.5, 0)}${louver(294.5, -197)}
          </svg>
          <div class="controls">
            <button aria-label="最小化"><svg width="18" height="20" viewBox="0 0 18 20"><path d="M4 12h10" stroke="#f0f0f0" stroke-width="2.500"/></svg></button>
            <button aria-label="还原"><svg width="16" height="20" viewBox="0 0 16 20"><path d="M3.500 8.500h6v6h-6z" fill="none" stroke="#f0f0f0" stroke-width="2"/><path d="M6 6h6v6" fill="none" stroke="#f0f0f0" stroke-width="1.500"/></svg></button>
            <button aria-label="关闭视图"><svg width="16" height="20" viewBox="0 0 16 20"><path d="M4 6l8 8M12 6l-8 8" stroke="#f0f0f0" stroke-width="2"/></svg></button>
          </div>
          <svg class="cube" width="137" height="103" viewBox="50 270 411 309" aria-label="ViewCube">
            <ellipse cx="245" cy="470" rx="140" ry="54" fill="#4a4a4a" opacity=".7"/>
            <path fill-rule="evenodd" d="M58 473a192 100 0 0 0 384 0a192 100 0 0 0-384 0zM98 473a151 70 0 0 1 302 0a151 70 0 0 1-302 0z" fill="#7f7f7f" stroke="#6b6b6b" stroke-width="3"/>
            <path d="M88 408l60-8M95 420l50-6M100 424l34-28M118 402l10 22M345 388l25 8M98 540l75 10M108 530l70 20M115 556l60-18M130 524l14 42M154 526l-10 38M388 512l66 8M390 526l54-20M395 502l50 24M410 494l8 38M430 494l-2 38" stroke="#b4b4b4" stroke-width="3"/>
            <path d="M229 282L349 310L272 358L146 324z" fill="#9d9d9d" stroke="#7a7a7a" stroke-width="3"/>
            <path d="M146 324L272 358V497L152 462z" fill="#939393" stroke="#7a7a7a" stroke-width="3"/>
            <path d="M349 310L347 435L272 497V358z" fill="#868686" stroke="#7a7a7a" stroke-width="3"/>
            <path d="M215 316l54 12M240 308l26 5" stroke="#707070" stroke-width="5"/>
            <text x="170" y="438" font-size="68" fill="#757575" transform="rotate(8 200 410)">左</text>
            <text x="284" y="426" font-size="52" fill="#6c6c6c" transform="rotate(-14 310 400)">前</text>
          </svg>
          <svg class="navbar" width="36" height="118" viewBox="0 0 36 118" aria-label="导航栏">
            <rect x="1" y="1" width="33" height="115" rx="4" fill="#777" stroke="#4a4a4a" stroke-width="2"/>
            <circle cx="27" cy="7" r="4" fill="#555"/><path d="M25 5l4 4M29 5l-4 4" stroke="#bbb"/>
            <path d="M7 31a10 10 0 0 1 10-10h10v10a10 10 0 0 1-20 0z" fill="#a3a3a3" stroke="#bcbcbc"/><circle cx="17" cy="31" r="6" fill="none" stroke="#777" stroke-width="2"/>
            <path d="M14 51h6l-3 3zM14 93h6l-3 3z" fill="#4c4c4c"/><path d="M3 58h28" stroke="#5b5b5b"/>
            <path d="M10 67h10v10H10z" fill="#7d9b66" stroke="#6c8a57"/><circle cx="20" cy="77" r="3.500" fill="#aaa"/><path d="M22 80l4 4" stroke="#aaa" stroke-width="1.500"/>
            <circle cx="27" cy="110" r="4" fill="#a6a6a6"/><path d="M24 109h6l-3 3z" fill="#555"/>
          </svg>
          <svg class="cursor" width="42" height="42" viewBox="0 0 42 42" aria-hidden="true"><circle cx="21" cy="20" r="20" fill="#e6bc74"/><path d="M21 20v17l4-4 3 6 3-1-3-6h5z" fill="#fff" stroke="#222" stroke-width="1.200"/></svg>
        </div>
        <div class="vscroll"><button aria-label="向上滚动">${chevron("up")}</button><div class="vthumb"></div><button aria-label="向下滚动">${chevron("down")}</button></div>
      </div>
      <div class="bar">
        <button class="scale">1 : 100</button>
        ${this.tools.map(([n, l]) => html`<button class="vc" aria-label=${l}>${icon(n, 20)}</button>`)}
        <button aria-label="向左滚动">${chevron("left", "#444", 2)}</button>
        <div class="hscroll"><div class="hthumb"></div></div>
        <button aria-label="向右滚动">${chevron("right", "#444", 2)}</button>
        <span class="grip"><svg width="12" height="12" viewBox="0 0 12 12"><path d="M9 0h3v3H9zM5 5h3v3H5zM9 5h3v3H9zM0 9h3v3H0zM5 9h3v3H5zM9 9h3v3H9z" fill="#aaa"/></svg></span>
      </div>`;
  }
}

@customElement("tree-guide")
class TreeGuide extends LitElement {
  @property() kind = "tee";
  @property() box = "";
  static styles = css`
    :host { display: block; flex: none; width: 26px; height: 22px; }
    svg { display: block; }
  `;
  render() {
    const v: Record<string, string> = { tee: "M10.500 0v22M11 11.500h15", first: "M10.500 11v11M11 11.500h15", last: "M10.500 0v11M11 11.500h15", line: "M10.500 0v22", none: "" };
    return html`<svg width="26" height="22" viewBox="0 0 26 22"><path d=${v[this.kind]} stroke="#999" stroke-dasharray="1 1" fill="none"/>
      ${this.box ? svg`<rect x="4.500" y="5.500" width="12" height="12" fill="#ebebeb" stroke="#8a8a8a"/><path d=${this.box === "+" ? "M7 11.500h7M10.500 8v7" : "M7 11.500h7"} stroke="#33406e"/>` : nothing}</svg>`;
  }
}

interface TreeItem { t: string; g: [string, string?][]; i?: string; sel?: boolean }
const l1 = (t: string, box = "+", kind = "tee"): TreeItem => ({ t, g: [["line"], [kind, box]] });
const NODES: TreeItem[] = [
  { t: "视图 (全部)", g: [["first", "-"]], i: "tViews" },
  l1("楼层平面", "-"),
  { t: "场地", g: [["line"], ["line"], ["tee"]] },
  { t: "标高 1", g: [["line"], ["line"], ["tee"]], sel: true },
  { t: "标高 2", g: [["line"], ["line"], ["last"]] },
  l1("天花板平面"), l1("三维视图"), l1("立面 (建筑立面)"), l1("面积平面"), l1("面积平面"), l1("面积平面"), l1("面积平面", "+", "last"),
  { t: "图例", g: [["tee"]], i: "tLegend" },
  { t: "明细表/数量", g: [["tee", "+"]], i: "tTable" },
  { t: "图纸 (全部)", g: [["tee"]], i: "tSheet" },
  { t: "族", g: [["tee", "+"]], i: "tFamily" },
  { t: "组", g: [["tee", "+"]], i: "tGroup" },
  { t: "Revit 链接", g: [["last"]], i: "tLink" },
];

@customElement("project-browser")
class ProjectBrowser extends LitElement {
  static styles = [base, css`
    :host { display: flex; flex-direction: column; width: 124px; overflow: hidden; position: relative; white-space: nowrap; color: #1c1c1c; background: #e0e0e0; }
    header { height: 27px; background: #b3bfcc; line-height: 27px; padding-left: 4px; flex: none; }
    ul { list-style: none; margin: 2px 0 2px 1px; padding: 0; flex: 1; border: solid #777; border-width: 2px 0 0 1px; background: #ebebeb; }
    li { display: flex; align-items: center; height: 22px; line-height: 22px; }
    .icon { margin-right: 3px; }
    .name { padding: 0 3px; }
    .deep { padding-left: 6px; }
    .sel { background: #d6d6d6; margin-left: 3px; padding-left: 3px; padding-right: 40px; }
    .ime { position: absolute; left: 36px; bottom: 15px; width: 120px; height: 57px; border: 2px solid #c5dfb8; border-radius: 14px; background: #e7ebe1; color: #8fc360; display: flex; align-items: center; gap: 20px; padding-left: 15px; font-size: 19px; }
  `];
  render() {
    return html`<header>项目浏览器 - 项目2</header>
      <ul>${NODES.map((n) => html`<li>${n.g.map(([k, b]) => html`<tree-guide kind=${k} box=${b ?? ""}></tree-guide>`)}
        ${n.i ? html`<span class="icon">${icon(n.i, 20)}</span>` : nothing}<span class=${classMap({ name: true, deep: !n.i && !n.sel, sel: !!n.sel })}>${n.t}</span></li>`)}</ul>
      <div class="ime"><span>中</span><span>°,</span></div>`;
  }
}

@customElement("status-bar")
class StatusBar extends LitElement {
  static styles = [base, css`
    :host { display: flex; align-items: center; height: 36px; flex: none; background: #c5c5c5; border-top: 1px solid #8a8a8a; border-bottom: 2px solid #3f3f3f; box-sizing: border-box; padding-bottom: 2px; white-space: nowrap; overflow: hidden; color: #1c1c1c; }
    .hint { width: 604px; flex: none; overflow: hidden; margin-left: -9px; line-height: 24px; }
    button { display: flex; align-items: center; justify-content: center; flex: none; }
    .w { width: 34px; } .s { width: 30px; }
    .combo { display: grid; width: 254px; height: 22px; align-items: center; flex: none; }
    .combo select, .combo svg { grid-area: 1 / 1; }
    .combo svg { justify-self: end; pointer-events: none; }
    select { appearance: none; width: 254px; height: 22px; background: #e9e9e9; border: 1px solid #dedede; border-radius: 0; font: inherit; line-height: 18px; color: #777; padding: 0 2px; margin: 0; opacity: 1; }
    .count { width: 28px; }
    .sel { margin-left: auto; display: flex; margin-right: -25px; }
  `];
  sel: [string, string][] = [["selLink", "选择链接"], ["selUnder", "选择基线图元"], ["selPin", "选择锁定图元"], ["selFace", "按面选择图元"], ["selDrag", "选择时拖曳图元"], ["progress", "后台进程"]];
  render() {
    return html`
      <span class="hint">按 Tab 键并单击可选择其他项目; 按 Ctrl 键并单击可将新项目添加到选择集; 按 Shift 键并单</span>
      <button class="w" aria-label="工作集">${icon("workset", 22)}</button>
      <span class="combo"><select disabled aria-label="活动工作集"></select>${chevron("down", "#aaa", 1.3)}</span>
      <button class="w" aria-label="编辑请求">${icon("request", 22)}</button>
      <span class="count">:0</span>
      <button class="w" aria-label="设计选项">${icon("options", 22)}</button>
      <button class="s" aria-label="排除选项">${icon("exclude", 22)}</button>
      <span class="combo"><select disabled aria-label="活动设计选项"><option>主模型</option></select>${chevron("down", "#aaa", 1.3)}</span>
      <span class="sel">${this.sel.map(([n, l]) => html`<button class="s" aria-label=${l}>${icon(n, 22)}</button>`)}
        <button class="s" aria-label="过滤器"><svg width="22" height="22" viewBox="0 0 22 22"><path d="M1 4h19l-6 7v7l-4-3v-4z" fill="none" stroke="#666" stroke-width="1.500"/></svg></button></span>`;
  }
}

@customElement("app-root")
class AppRoot extends LitElement {
  static styles = [base, css`
    :host { display: flex; flex-direction: column; height: 100vh; overflow: hidden; background: #e0e0e0; }
    .behind { height: 19px; flex: none; overflow: hidden; display: flex; justify-content: space-between; background: #ebebeb; color: #8d8d8d; font-size: 16px; line-height: 28px; }
    .doc { margin-left: -4px; }
    .behind svg { margin: 7px 14px 0 0; }
    main { flex: 1; min-height: 0; display: grid; grid-template: minmax(0, 1fr) / 164px minmax(0, 1fr) 124px; column-gap: 4px; }
    model-view { margin-right: 2px; }
    .desk { height: 6px; flex: none; background: linear-gradient(to right, #e6e2dc 32px, #dcd2c6 32px); }
  `];
  render() {
    return html`
      <div class="behind"><span class="doc">- Acrobat Pro</span><svg width="12" height="12" viewBox="0 0 12 12"><path d="M0 6.500h12" stroke="#777"/></svg></div>
      <title-bar></title-bar>
      <ribbon-tabs></ribbon-tabs>
      <ribbon-panels></ribbon-panels>
      <main><property-palette></property-palette><model-view></model-view><project-browser></project-browser></main>
      <status-bar></status-bar>
      <div class="desk"></div>`;
  }
}
